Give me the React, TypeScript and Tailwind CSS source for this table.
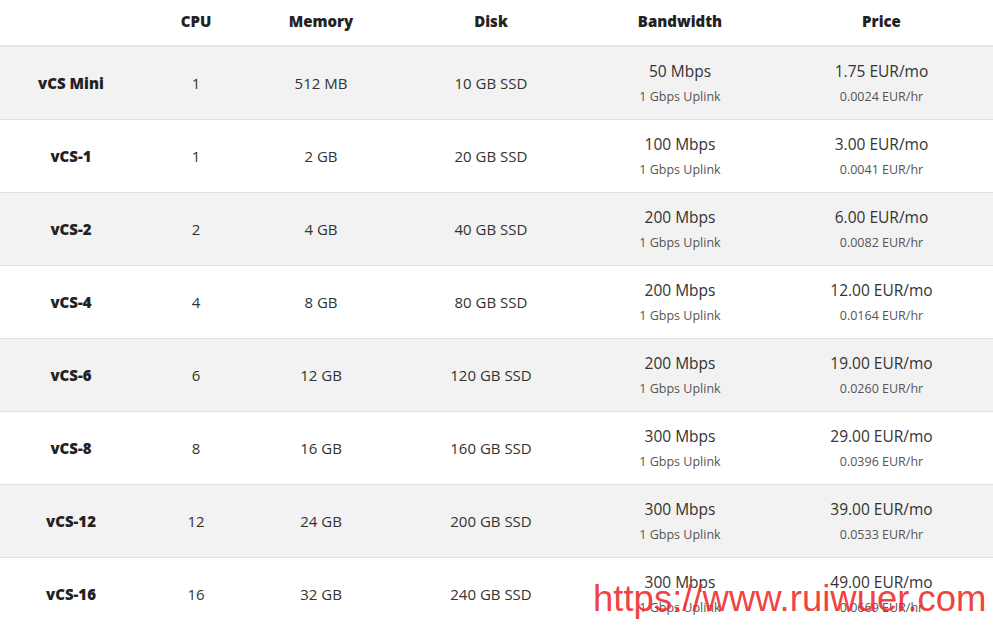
const plans = [
  { name: 'vCS Mini', cpu: '1', mem: '512 MB', disk: '10 GB SSD', bw: '50 Mbps', mo: '1.75', hr: '0.0024' },
  { name: 'vCS-1', cpu: '1', mem: '2 GB', disk: '20 GB SSD', bw: '100 Mbps', mo: '3.00', hr: '0.0041' },
  { name: 'vCS-2', cpu: '2', mem: '4 GB', disk: '40 GB SSD', bw: '200 Mbps', mo: '6.00', hr: '0.0082' },
  { name: 'vCS-4', cpu: '4', mem: '8 GB', disk: '80 GB SSD', bw: '200 Mbps', mo: '12.00', hr: '0.0164' },
  { name: 'vCS-6', cpu: '6', mem: '12 GB', disk: '120 GB SSD', bw: '200 Mbps', mo: '19.00', hr: '0.0260' },
  { name: 'vCS-8', cpu: '8', mem: '16 GB', disk: '160 GB SSD', bw: '300 Mbps', mo: '29.00', hr: '0.0396' },
  { name: 'vCS-12', cpu: '12', mem: '24 GB', disk: '200 GB SSD', bw: '300 Mbps', mo: '39.00', hr: '0.0533' },
  { name: 'vCS-16', cpu: '16', mem: '32 GB', disk: '240 GB SSD', bw: '300 Mbps', mo: '49.00', hr: '0.0669' },
];

const cols = 'grid grid-cols-[142px_108px_142px_198px_180px_223px]';

export default function App() {
  return (
    <div className="relative w-[993px] h-[627px] overflow-hidden bg-white text-[#333] font-['Open_Sans',sans-serif]">
      {/* header */}
      <div className={`${cols} h-[47px] items-center text-center text-[15px] font-extrabold text-[#222] border-b-2 border-[#e4e4e4] pb-[3px]`}>
        <div></div>
        <div>CPU</div>
        <div>Memory</div>
        <div>Disk</div>
        <div>Bandwidth</div>
        <div>Price</div>
      </div>

      {plans.map((p, idx) => (
        <div
          key={idx}
          className={`${cols} h-[73px] items-center text-center text-[15px] border-b border-[#e0e0e0] ${idx % 2 === 0 ? 'bg-[#f2f2f2]' : 'bg-white'}`}
        >
          <div className="font-extrabold text-[#222]">{p.name}</div>
          <div>{p.cpu}</div>
          <div>{p.mem}</div>
          <div>{p.disk}</div>
          <div className="flex flex-col items-center pt-[2px]">
            <span className="text-[15.5px] leading-[24px]">{p.bw}</span>
            <span className="mt-[2px] text-[12.5px] leading-[24px] text-[#555]">1 Gbps Uplink</span>
          </div>
          <div className="flex flex-col items-center pt-[2px]">
            <span className="text-[15.5px] leading-[24px]">{p.mo} EUR/mo</span>
            <span className="mt-[2px] text-[12.5px] leading-[24px] text-[#555]">{p.hr} EUR/hr</span>
          </div>
        </div>
      ))}

      {/* watermark */}
      <div className="absolute left-[593px] top-[577px] text-[36.5px] leading-[44px] text-[#ee2a2a]/90 font-['Liberation_Sans',sans-serif]">
        https://www.ruiwuer.com
      </div>
    </div>
  );
}
